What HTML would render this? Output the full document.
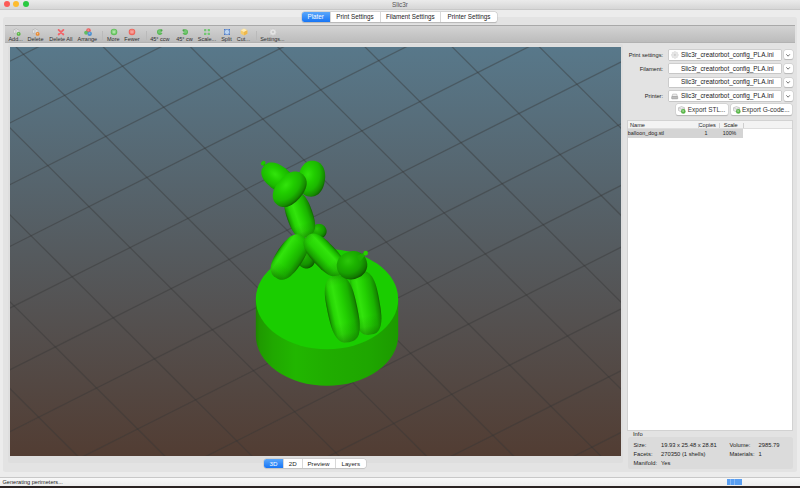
<!DOCTYPE html>
<html><head><meta charset="utf-8"><title>Slic3r</title>
<style>
*{box-sizing:border-box;margin:0;padding:0}
html,body{width:800px;height:488px;overflow:hidden}
body{background:#ececec;font-family:"Liberation Sans",sans-serif;font-size:6.3px;color:#222;position:relative}
.abs{position:absolute}
.t{position:absolute;white-space:nowrap;line-height:8px;height:8px}
#titlebar{left:0;top:0;width:800px;height:10px;background:linear-gradient(#ebebeb,#d6d6d6);border-bottom:1px solid #c8c8c8}
.tl{position:absolute;top:1.1px;width:6px;height:6px;border-radius:50%}
#outer{left:3.3px;top:17px;width:794.2px;height:455.2px;background:#e3e3e3;border-radius:2.5px}
#inner{left:7.8px;top:44px;width:615.5px;height:418.8px;background:#dedede;border-radius:2px}
#toolbar{left:5px;top:25px;width:790px;height:18px;background:linear-gradient(#d3d3d3,#bcbcbc);border-top:1px solid #a9a9a9;border-bottom:0.5px solid #b2b2b2}
.seg{position:absolute;display:flex;background:#fff;border-radius:2.5px;box-shadow:0 0 0 0.5px #c4c4c4,0 0.5px 1px rgba(0,0,0,.25);overflow:hidden}
.seg div{height:100%;text-align:center;border-right:0.5px solid #d8d8d8;white-space:nowrap}
.seg div:last-child{border-right:0}
.seg .on{background:linear-gradient(#5aa7fb,#1775f5);color:#fff}
.tbl{position:absolute;top:35px;font-size:5.5px;line-height:8px;white-space:nowrap;color:#303030;transform:translateX(-50%)}
.ico{position:absolute;top:27.8px;width:8px;height:8px;transform:translateX(-50%)}
.sep{position:absolute;top:30.5px;width:0.6px;height:9px;background:#bababa}
.combo{position:absolute;left:668.5px;width:112.8px;height:9.5px;background:#fff;border-radius:0.5px;box-shadow:0 0 0 0.6px #bcbcbc,0 0.4px 0.6px rgba(0,0,0,.15)}
.combo span{position:absolute;left:12.4px;top:0.8px;line-height:8px;font-size:6.4px;letter-spacing:-0.0px;white-space:nowrap;color:#1a1a1a}
.dd{position:absolute;left:783.7px;width:9.5px;height:9.3px;background:#fff;border-radius:2px;box-shadow:0 0 0 0.5px #c9c9c9,0 0.5px 0.8px rgba(0,0,0,.25)}
.dd svg{position:absolute;left:2.7px;top:3.6px}
.lab{position:absolute;right:136.9px;line-height:8px;white-space:nowrap;font-size:5.7px;color:#222}
.btn{position:absolute;top:104.3px;height:10.8px;background:#fff;border-radius:2px;box-shadow:0 0 0 0.5px #c9c9c9,0 0.5px 0.8px rgba(0,0,0,.28)}
.btn span{position:absolute;top:1.3px;line-height:8px;white-space:nowrap;font-size:6.45px;color:#333}
#list{left:627.2px;top:120.3px;width:166.3px;height:310.5px;background:#fff;border:0.5px solid #d2d2d2}
#lhead{left:0;top:0;width:100%;height:7.8px;background:#f3f3f3;border-bottom:0.5px solid #dedede}
#lrow{left:0;top:7.5px;width:115px;height:9.3px;background:#d4d4d4}
.lt{position:absolute;line-height:8px;font-size:5.3px;white-space:nowrap;color:#222}
.csep{position:absolute;top:1.5px;width:0.5px;height:5px;background:#cfcfcf}
#info{left:628.2px;top:437px;width:164.4px;height:32.2px;background:#dbdbdb;border-radius:2.5px}
.it{position:absolute;line-height:8px;font-size:5.8px;white-space:nowrap;color:#222}
#status{left:0;top:476.5px;width:800px;height:9px;background:linear-gradient(#f8f8f8,#ededed);border-top:0.5px solid #c8c8c8}
#dark{left:0;top:485.5px;width:800px;height:3px;background:#2a2322}
</style></head><body>
<div id="titlebar" class="abs">
 <div class="tl" style="left:3.5px;background:#fc5b57"></div>
 <div class="tl" style="left:13px;background:#fdbc2e"></div>
 <div class="tl" style="left:22.5px;background:#29c940"></div>
 <div class="t" style="left:0;width:800px;text-align:center;top:0.5px;font-size:6.4px;color:#555">Slic3r</div>
</div>
<div id="outer" class="abs"></div>
<div class="seg" style="left:302px;top:12px;width:195px;height:10px;font-size:6.3px;line-height:10px">
 <div class="on" style="width:28.5px">Plater</div><div style="width:50px">Print Settings</div><div style="width:60.5px">Filament Settings</div><div style="width:56px">Printer Settings</div>
</div>
<div id="toolbar" class="abs"></div>
<div id="tbitems">
<svg class="ico" style="left:17px" width="8" height="8" viewBox="0 0 16 16"><g fill="#ffffff" stroke="#9c9c9c" stroke-width="0.9"><rect x="1" y="3.5" width="3.2" height="7" rx="1.4"/><rect x="4.6" y="1.5" width="3.2" height="9" rx="1.4"/><rect x="8.2" y="3" width="3.2" height="7" rx="1.4"/></g><circle cx="11.3" cy="11.8" r="3.9" fill="#52b23e"/><circle cx="11" cy="11.3" r="1.6" fill="#a5dd96"/></svg><div class="tbl" style="left:15.6px">Add...</div><svg class="ico" style="left:36px" width="8" height="8" viewBox="0 0 16 16"><g fill="#ffffff" stroke="#9c9c9c" stroke-width="0.9"><rect x="1" y="3.5" width="3.2" height="7" rx="1.4"/><rect x="4.6" y="1.5" width="3.2" height="9" rx="1.4"/><rect x="8.2" y="3" width="3.2" height="7" rx="1.4"/></g><circle cx="11.3" cy="11.8" r="3.9" fill="#ea862c"/><circle cx="11" cy="11.3" r="1.6" fill="#f7c28d"/></svg><div class="tbl" style="left:35.5px">Delete</div><svg class="ico" style="left:61px" width="8" height="8" viewBox="0 0 16 16"><path d="M3.2 3.8L12.8 13M12.8 3.8L3.2 13" stroke="#f26468" stroke-width="3.6" stroke-linecap="round"/></svg><div class="tbl" style="left:60.8px">Delete All</div><svg class="ico" style="left:88px" width="8" height="8" viewBox="0 0 16 16"><circle cx="9" cy="5.2" r="4.6" fill="#e9605f"/><circle cx="4.3" cy="9.5" r="4" fill="#62bb62"/><circle cx="11.3" cy="11.3" r="4.5" fill="#4a8fd0"/><circle cx="8.6" cy="4.3" r="2" fill="#f4a3a0" opacity=".7"/><circle cx="11" cy="10.6" r="2" fill="#9cc6ea" opacity=".7"/></svg><div class="tbl" style="left:87.3px">Arrange</div><svg class="ico" style="left:113.5px" width="8" height="8" viewBox="0 0 16 16"><circle cx="8" cy="8" r="6.6" fill="#62c05c"/><circle cx="8" cy="7.4" r="4.6" fill="#93d98c" opacity=".75"/><path d="M8 5.4V10.6M5.4 8H10.6" stroke="#c4eebd" stroke-width="1.5"/></svg><div class="tbl" style="left:113.3px">More</div><svg class="ico" style="left:132px" width="8" height="8" viewBox="0 0 16 16"><circle cx="8" cy="8" r="6.6" fill="#ee655c"/><circle cx="8" cy="7.4" r="4.6" fill="#f59a92" opacity=".75"/><path d="M5.4 8H10.6" stroke="#fac6c0" stroke-width="1.5"/></svg><div class="tbl" style="left:132px">Fewer</div><svg class="ico" style="left:159.7px" width="8" height="8" viewBox="0 0 16 16"><circle cx="7.6" cy="8.2" r="5.6" fill="#5ab857"/><circle cx="7" cy="7.4" r="3.4" fill="#86d083" opacity=".6"/><path d="M9 8.4L15.5 4.6V11.5Z" fill="#c9c9c9"/><path d="M9.2 2.2L13.8 4.2L10 7Z" fill="#4aa548"/></svg><div class="tbl" style="left:159.9px">45° ccw</div><svg class="ico" style="left:184.6px" width="8" height="8" viewBox="0 0 16 16"><circle cx="8.4" cy="8.2" r="5.6" fill="#5ab857"/><circle cx="9" cy="7.4" r="3.4" fill="#86d083" opacity=".6"/><path d="M7 8.4L0.5 4.6V11.5Z" fill="#c9c9c9"/><path d="M6.8 2.2L2.2 4.2L6 7Z" fill="#4aa548"/></svg><div class="tbl" style="left:184.5px">45° cw</div><svg class="ico" style="left:207px" width="8" height="8" viewBox="0 0 16 16"><g fill="#72c772"><rect x="2" y="2" width="4.6" height="4.6" rx="1"/><rect x="9.4" y="2" width="4.6" height="4.6" rx="1"/><rect x="2" y="9.4" width="4.6" height="4.6" rx="1"/><rect x="9.4" y="9.4" width="4.6" height="4.6" rx="1"/></g></svg><div class="tbl" style="left:207px">Scale...</div><svg class="ico" style="left:226.6px" width="8" height="8" viewBox="0 0 16 16"><rect x="3.2" y="3.2" width="9.6" height="9.6" fill="#b9d3f2"/><g fill="#4878c8"><rect x="2" y="2" width="3.2" height="3.2"/><rect x="10.8" y="2" width="3.2" height="3.2"/><rect x="2" y="10.8" width="3.2" height="3.2"/><rect x="10.8" y="10.8" width="3.2" height="3.2"/><rect x="6.6" y="2.2" width="2.6" height="1.8"/><rect x="6.6" y="12" width="2.6" height="1.8"/><rect x="2.2" y="6.6" width="1.8" height="2.6"/><rect x="12" y="6.6" width="1.8" height="2.6"/></g></svg><div class="tbl" style="left:226.5px">Split</div><svg class="ico" style="left:243.7px" width="8" height="8" viewBox="0 0 16 16"><path d="M8 1.2L14.6 4.4V11.4L8 14.8L1.4 11.4V4.4Z" fill="#f5cb6c"/><path d="M8 1.2L14.6 4.4L8 7.8L1.4 4.4Z" fill="#fdecb8"/><path d="M8 7.8V14.8L14.6 11.4V4.4Z" fill="#eeb84c"/></svg><div class="tbl" style="left:243.4px">Cut...</div><svg class="ico" style="left:272.75px" width="8" height="8" viewBox="0 0 16 16"><g fill="#e4e4e4" stroke="#bcbcbc" stroke-width="0.5"><rect x="6.4" y="0.8" width="3.2" height="14.4" rx="0.8" transform="rotate(0 8 8)"/><rect x="6.4" y="0.8" width="3.2" height="14.4" rx="0.8" transform="rotate(45 8 8)"/><rect x="6.4" y="0.8" width="3.2" height="14.4" rx="0.8" transform="rotate(90 8 8)"/><rect x="6.4" y="0.8" width="3.2" height="14.4" rx="0.8" transform="rotate(135 8 8)"/></g><circle cx="8" cy="8" r="5.2" fill="#e4e4e4"/><circle cx="8" cy="8" r="2.2" fill="#c6c6c6"/></svg><div class="tbl" style="left:272.4px">Settings...</div><div class="sep" style="left:102px"></div><div class="sep" style="left:145.5px"></div><div class="sep" style="left:255.6px"></div>
</div>
<div id="inner" class="abs"></div>
<div class="abs" style="left:9.6px;top:47px;width:611.4px;height:409.1px;overflow:hidden"><svg id="cv" width="611.4" height="409.1" viewBox="0 0 611.4 409.1">
<defs>
<linearGradient id="bg" x1="0" y1="0" x2="0" y2="1"><stop offset="0" stop-color="#58788a"/><stop offset="1" stop-color="#523d33"/></linearGradient>
<linearGradient id="side" x1="0" y1="0" x2="1" y2="0"><stop offset="0" stop-color="#1e8600"/><stop offset="0.03" stop-color="#1f9a00"/><stop offset="0.12" stop-color="#20a800"/><stop offset="0.28" stop-color="#21b600"/><stop offset="0.5" stop-color="#20ad00"/><stop offset="0.8" stop-color="#1ea600"/><stop offset="1" stop-color="#1c9a00"/></linearGradient>
<radialGradient id="g0" cx="0.364" cy="0.340" r="0.72" fx="0.364" fy="0.340"><stop offset="0" stop-color="#2ac10a"/><stop offset="0.32" stop-color="#1caf00"/><stop offset="0.62" stop-color="#169c00"/><stop offset="0.86" stop-color="#117500"/><stop offset="1" stop-color="#0c4a00"/></radialGradient><radialGradient id="g1" cx="0.360" cy="0.348" r="0.72" fx="0.360" fy="0.348"><stop offset="0" stop-color="#28b609"/><stop offset="0.32" stop-color="#1aa400"/><stop offset="0.62" stop-color="#159300"/><stop offset="0.86" stop-color="#106e00"/><stop offset="1" stop-color="#0c4600"/></radialGradient><radialGradient id="g2" cx="0.339" cy="0.397" r="0.72" fx="0.339" fy="0.397"><stop offset="0" stop-color="#32e40c"/><stop offset="0.32" stop-color="#21ce00"/><stop offset="0.62" stop-color="#1bb800"/><stop offset="0.86" stop-color="#158a00"/><stop offset="1" stop-color="#0f5800"/></radialGradient><radialGradient id="g3" cx="0.368" cy="0.460" r="0.72" fx="0.368" fy="0.460"><stop offset="0" stop-color="#32e40c"/><stop offset="0.32" stop-color="#21ce00"/><stop offset="0.62" stop-color="#1bb800"/><stop offset="0.86" stop-color="#158a00"/><stop offset="1" stop-color="#0f5800"/></radialGradient><linearGradient id="g4" x1="0" y1="0" x2="1" y2="0"><stop offset="0.000" stop-color="#126400"/><stop offset="0.059" stop-color="#18a000"/><stop offset="0.201" stop-color="#26d404"/><stop offset="0.366" stop-color="#32e40c"/><stop offset="0.588" stop-color="#23d002"/><stop offset="0.810" stop-color="#1ab200"/><stop offset="0.949" stop-color="#158700"/><stop offset="1.000" stop-color="#115f00"/></linearGradient><linearGradient id="g4e" x1="0" y1="0" x2="0" y2="1"><stop offset="0" stop-color="#0c4000" stop-opacity="0.22"/><stop offset="0.063" stop-color="#0c4000" stop-opacity="0.07"/><stop offset="0.14" stop-color="#0c4000" stop-opacity="0"/><stop offset="0.7" stop-color="#0c4000" stop-opacity="0"/><stop offset="0.865" stop-color="#0c4000" stop-opacity="0.13"/><stop offset="1" stop-color="#0c4000" stop-opacity="0.42"/></linearGradient><radialGradient id="g6" cx="0.519" cy="0.289" r="0.72" fx="0.519" fy="0.289"><stop offset="0" stop-color="#32e40c"/><stop offset="0.32" stop-color="#21ce00"/><stop offset="0.62" stop-color="#1bb800"/><stop offset="0.86" stop-color="#158a00"/><stop offset="1" stop-color="#0f5800"/></radialGradient><linearGradient id="g7" x1="0" y1="0" x2="1" y2="0"><stop offset="0.000" stop-color="#126400"/><stop offset="0.032" stop-color="#18a000"/><stop offset="0.110" stop-color="#26d404"/><stop offset="0.200" stop-color="#32e40c"/><stop offset="0.480" stop-color="#23d002"/><stop offset="0.760" stop-color="#1ab200"/><stop offset="0.936" stop-color="#158700"/><stop offset="1.000" stop-color="#115f00"/></linearGradient><linearGradient id="g7e" x1="0" y1="0" x2="0" y2="1"><stop offset="0" stop-color="#0c4000" stop-opacity="0.22"/><stop offset="0.063" stop-color="#0c4000" stop-opacity="0.07"/><stop offset="0.14" stop-color="#0c4000" stop-opacity="0"/><stop offset="0.7" stop-color="#0c4000" stop-opacity="0"/><stop offset="0.865" stop-color="#0c4000" stop-opacity="0.13"/><stop offset="1" stop-color="#0c4000" stop-opacity="0.42"/></linearGradient><linearGradient id="g9" x1="0" y1="0" x2="1" y2="0"><stop offset="0.000" stop-color="#126400"/><stop offset="0.112" stop-color="#18a000"/><stop offset="0.385" stop-color="#26d404"/><stop offset="0.700" stop-color="#32e40c"/><stop offset="0.805" stop-color="#23d002"/><stop offset="0.910" stop-color="#1ab200"/><stop offset="0.976" stop-color="#158700"/><stop offset="1.000" stop-color="#115f00"/></linearGradient><linearGradient id="g9e" x1="0" y1="0" x2="0" y2="1"><stop offset="0" stop-color="#0c4000" stop-opacity="0.22"/><stop offset="0.063" stop-color="#0c4000" stop-opacity="0.07"/><stop offset="0.14" stop-color="#0c4000" stop-opacity="0"/><stop offset="0.7" stop-color="#0c4000" stop-opacity="0"/><stop offset="0.865" stop-color="#0c4000" stop-opacity="0.13"/><stop offset="1" stop-color="#0c4000" stop-opacity="0.42"/></linearGradient><linearGradient id="g11" x1="0" y1="0" x2="1" y2="0"><stop offset="0.000" stop-color="#126400"/><stop offset="0.051" stop-color="#18a000"/><stop offset="0.175" stop-color="#26d404"/><stop offset="0.318" stop-color="#32e40c"/><stop offset="0.557" stop-color="#23d002"/><stop offset="0.795" stop-color="#1ab200"/><stop offset="0.945" stop-color="#158700"/><stop offset="1.000" stop-color="#115f00"/></linearGradient><linearGradient id="g11e" x1="0" y1="0" x2="0" y2="1"><stop offset="0" stop-color="#0c4000" stop-opacity="0.22"/><stop offset="0.063" stop-color="#0c4000" stop-opacity="0.07"/><stop offset="0.14" stop-color="#0c4000" stop-opacity="0"/><stop offset="0.7" stop-color="#0c4000" stop-opacity="0"/><stop offset="0.865" stop-color="#0c4000" stop-opacity="0.13"/><stop offset="1" stop-color="#0c4000" stop-opacity="0.42"/></linearGradient><linearGradient id="g13" x1="0" y1="0" x2="1" y2="0"><stop offset="0.000" stop-color="#126400"/><stop offset="0.053" stop-color="#18a000"/><stop offset="0.181" stop-color="#26d404"/><stop offset="0.328" stop-color="#32e40c"/><stop offset="0.563" stop-color="#23d002"/><stop offset="0.798" stop-color="#1ab200"/><stop offset="0.946" stop-color="#158700"/><stop offset="1.000" stop-color="#115f00"/></linearGradient><linearGradient id="g13e" x1="0" y1="0" x2="0" y2="1"><stop offset="0" stop-color="#0c4000" stop-opacity="0.22"/><stop offset="0.063" stop-color="#0c4000" stop-opacity="0.07"/><stop offset="0.14" stop-color="#0c4000" stop-opacity="0"/><stop offset="0.7" stop-color="#0c4000" stop-opacity="0"/><stop offset="0.865" stop-color="#0c4000" stop-opacity="0.13"/><stop offset="1" stop-color="#0c4000" stop-opacity="0.42"/></linearGradient><radialGradient id="g15" cx="0.430" cy="0.302" r="0.72" fx="0.430" fy="0.302"><stop offset="0" stop-color="#2cc80a"/><stop offset="0.32" stop-color="#1db500"/><stop offset="0.62" stop-color="#17a100"/><stop offset="0.86" stop-color="#127900"/><stop offset="1" stop-color="#0d4d00"/></radialGradient><radialGradient id="bal" cx="0.42" cy="0.4" r="0.62"><stop offset="0" stop-color="#22d400"/><stop offset="0.55" stop-color="#1cc000"/><stop offset="0.85" stop-color="#189800"/><stop offset="1" stop-color="#157000"/></radialGradient>
</defs>
<rect width="611.4" height="409.1" fill="url(#bg)"/>
<g stroke="#383838" stroke-opacity="0.42" stroke-width="1.25"><line x1="-1364.5" y1="-409.9" x2="281.1" y2="1230.9"/><line x1="-1306.5" y1="-439.1" x2="339.1" y2="1201.7"/><line x1="-1248.6" y1="-468.3" x2="397.0" y2="1172.5"/><line x1="-1190.6" y1="-497.5" x2="455.0" y2="1143.3"/><line x1="-1132.7" y1="-526.7" x2="512.9" y2="1114.1"/><line x1="-1074.7" y1="-555.9" x2="570.9" y2="1084.9"/><line x1="-1016.8" y1="-585.1" x2="628.8" y2="1055.7"/><line x1="-958.8" y1="-614.3" x2="686.8" y2="1026.5"/><line x1="-900.9" y1="-643.5" x2="744.7" y2="997.3"/><line x1="-842.9" y1="-672.7" x2="802.7" y2="968.2"/><line x1="-785.0" y1="-701.8" x2="860.6" y2="939.0"/><line x1="-727.0" y1="-731.0" x2="918.6" y2="909.8"/><line x1="-669.1" y1="-760.2" x2="976.5" y2="880.6"/><line x1="-611.1" y1="-789.4" x2="1034.5" y2="851.4"/><line x1="-553.2" y1="-818.6" x2="1092.4" y2="822.2"/><line x1="-495.2" y1="-847.8" x2="1150.4" y2="793.0"/><line x1="-437.3" y1="-877.0" x2="1208.3" y2="763.8"/><line x1="-379.3" y1="-906.2" x2="1266.3" y2="734.6"/><line x1="-321.4" y1="-935.4" x2="1324.2" y2="705.4"/><line x1="-263.4" y1="-964.6" x2="1382.2" y2="676.3"/><line x1="-205.5" y1="-993.7" x2="1440.1" y2="647.1"/><line x1="-147.5" y1="-1022.9" x2="1498.1" y2="617.9"/><line x1="-89.6" y1="-1052.1" x2="1556.0" y2="588.7"/><line x1="-31.6" y1="-1081.3" x2="1614.0" y2="559.5"/><line x1="26.3" y1="-1110.5" x2="1671.9" y2="530.3"/><line x1="84.3" y1="-1139.7" x2="1729.9" y2="501.1"/><line x1="-1498.9" y1="151.7" x2="819.1" y2="-1015.9"/><line x1="-1457.8" y1="192.8" x2="860.2" y2="-974.8"/><line x1="-1416.7" y1="233.8" x2="901.3" y2="-933.8"/><line x1="-1375.5" y1="274.8" x2="942.5" y2="-892.8"/><line x1="-1334.4" y1="315.8" x2="983.6" y2="-851.8"/><line x1="-1293.2" y1="356.8" x2="1024.8" y2="-810.8"/><line x1="-1252.1" y1="397.9" x2="1065.9" y2="-769.7"/><line x1="-1211.0" y1="438.9" x2="1107.0" y2="-728.7"/><line x1="-1169.8" y1="479.9" x2="1148.2" y2="-687.7"/><line x1="-1128.7" y1="520.9" x2="1189.3" y2="-646.7"/><line x1="-1087.5" y1="561.9" x2="1230.5" y2="-605.7"/><line x1="-1046.4" y1="603.0" x2="1271.6" y2="-564.6"/><line x1="-1005.3" y1="644.0" x2="1312.7" y2="-523.6"/><line x1="-964.1" y1="685.0" x2="1353.9" y2="-482.6"/><line x1="-923.0" y1="726.0" x2="1395.0" y2="-441.6"/><line x1="-881.8" y1="767.0" x2="1436.2" y2="-400.6"/><line x1="-840.7" y1="808.1" x2="1477.3" y2="-359.5"/><line x1="-799.6" y1="849.1" x2="1518.4" y2="-318.5"/><line x1="-758.4" y1="890.1" x2="1559.6" y2="-277.5"/><line x1="-717.3" y1="931.1" x2="1600.7" y2="-236.5"/><line x1="-676.1" y1="972.1" x2="1641.9" y2="-195.5"/><line x1="-635.0" y1="1013.2" x2="1683.0" y2="-154.4"/><line x1="-593.9" y1="1054.2" x2="1724.1" y2="-113.4"/><line x1="-552.7" y1="1095.2" x2="1765.3" y2="-72.4"/><line x1="-511.6" y1="1136.2" x2="1806.4" y2="-31.4"/><line x1="-470.4" y1="1177.2" x2="1847.6" y2="9.6"/></g>
<path d="M245.8 252.2 L245.8 288.6 A71.2 50.1 0 0 0 388.2 288.6 L388.2 252.2 Z" fill="url(#side)"/><ellipse cx="317.0" cy="252.2" rx="71.2" ry="50.1" fill="#1acd00"/><ellipse cx="253.2" cy="116.2" rx="2.6" ry="2.0" transform="rotate(-40 253.2 116.2)" fill="#1fc400" /><path d="M253.9 117.5 L256.9 120.5" stroke="#1cb000" stroke-width="2.2"/><path d="M7.6 0.0 L7.6 0.8 L7.4 1.6 L7.2 2.4 L6.8 3.2 L6.4 3.9 L5.9 4.6 L5.4 5.2 L4.7 5.8 L4.0 6.3 L3.3 6.7 L2.5 7.0 L1.7 7.2 L0.9 7.4 L0.0 7.4 L-0.9 7.4 L-1.7 7.2 L-2.5 7.0 L-3.3 6.7 L-4.0 6.3 L-4.7 5.8 L-5.4 5.2 L-5.9 4.6 L-6.4 3.9 L-6.8 3.2 L-7.2 2.4 L-7.4 1.6 L-7.6 0.8 L-7.6 0.0 L-7.6 -0.8 L-7.4 -1.6 L-7.2 -2.4 L-6.8 -3.2 L-6.4 -3.9 L-5.9 -4.6 L-5.4 -5.2 L-4.7 -5.8 L-4.0 -6.3 L-3.3 -6.7 L-2.5 -7.0 L-1.7 -7.2 L-0.9 -7.4 L-0.0 -7.4 L0.9 -7.4 L1.7 -7.2 L2.5 -7.0 L3.3 -6.7 L4.0 -6.3 L4.7 -5.8 L5.4 -5.2 L5.9 -4.6 L6.4 -3.9 L6.8 -3.2 L7.2 -2.4 L7.4 -1.6 L7.6 -0.8Z" transform="translate(309.0 184.3) rotate(0)" fill="url(#g0)"/><path d="M9.0 0.0 L8.9 1.1 L8.8 2.1 L8.5 3.1 L8.1 4.1 L7.6 5.1 L7.0 5.9 L6.4 6.7 L5.6 7.4 L4.8 8.0 L3.9 8.6 L3.0 9.0 L2.0 9.3 L1.0 9.4 L0.0 9.5 L-1.0 9.4 L-2.0 9.3 L-3.0 9.0 L-3.9 8.6 L-4.8 8.0 L-5.6 7.4 L-6.4 6.7 L-7.0 5.9 L-7.6 5.1 L-8.1 4.1 L-8.5 3.1 L-8.8 2.1 L-8.9 1.1 L-9.0 0.0 L-8.9 -1.1 L-8.8 -2.1 L-8.5 -3.1 L-8.1 -4.1 L-7.6 -5.1 L-7.0 -5.9 L-6.4 -6.7 L-5.6 -7.4 L-4.8 -8.0 L-3.9 -8.6 L-3.0 -9.0 L-2.0 -9.3 L-1.0 -9.4 L-0.0 -9.5 L1.0 -9.4 L2.0 -9.3 L3.0 -9.0 L3.9 -8.6 L4.8 -8.0 L5.6 -7.4 L6.4 -6.7 L7.0 -5.9 L7.6 -5.1 L8.1 -4.1 L8.5 -3.1 L8.8 -2.1 L8.9 -1.1Z" transform="translate(296.4 212.0) rotate(0)" fill="url(#g1)"/><path d="M13.3 0.0 L13.2 2.5 L13.0 4.6 L12.6 6.6 L12.1 8.4 L11.4 10.1 L10.6 11.7 L9.7 13.1 L8.7 14.4 L7.5 15.5 L6.2 16.4 L4.9 17.1 L3.4 17.6 L1.8 17.9 L0.0 18.0 L-1.8 17.9 L-3.4 17.6 L-4.9 17.1 L-6.2 16.4 L-7.5 15.5 L-8.7 14.4 L-9.7 13.1 L-10.6 11.7 L-11.4 10.1 L-12.1 8.4 L-12.6 6.6 L-13.0 4.6 L-13.2 2.5 L-13.3 0.0 L-13.2 -2.5 L-13.0 -4.6 L-12.6 -6.6 L-12.1 -8.4 L-11.4 -10.1 L-10.6 -11.7 L-9.7 -13.1 L-8.7 -14.4 L-7.5 -15.5 L-6.2 -16.4 L-4.9 -17.1 L-3.4 -17.6 L-1.8 -17.9 L-0.0 -18.0 L1.8 -17.9 L3.4 -17.6 L4.9 -17.1 L6.2 -16.4 L7.5 -15.5 L8.7 -14.4 L9.7 -13.1 L10.6 -11.7 L11.4 -10.1 L12.1 -8.4 L12.6 -6.6 L13.0 -4.6 L13.2 -2.5Z" transform="translate(301.7 131.7) rotate(8)" fill="url(#g2)"/><path d="M18.8 0.0 L18.7 1.8 L18.4 3.2 L17.9 4.5 L17.2 5.8 L16.3 6.9 L15.2 7.9 L13.9 8.8 L12.5 9.6 L10.9 10.3 L9.1 10.9 L7.2 11.3 L5.1 11.6 L2.8 11.8 L0.0 11.9 L-2.8 11.8 L-5.1 11.6 L-7.2 11.3 L-9.1 10.9 L-10.9 10.3 L-12.5 9.6 L-13.9 8.8 L-15.2 7.9 L-16.3 6.9 L-17.2 5.8 L-17.9 4.5 L-18.4 3.2 L-18.7 1.8 L-18.8 0.0 L-18.7 -1.8 L-18.4 -3.2 L-17.9 -4.5 L-17.2 -5.8 L-16.3 -6.9 L-15.2 -7.9 L-13.9 -8.8 L-12.5 -9.6 L-10.9 -10.3 L-9.1 -10.9 L-7.2 -11.3 L-5.1 -11.6 L-2.8 -11.8 L-0.0 -11.9 L2.8 -11.8 L5.1 -11.6 L7.2 -11.3 L9.1 -10.9 L10.9 -10.3 L12.5 -9.6 L13.9 -8.8 L15.2 -7.9 L16.3 -6.9 L17.2 -5.8 L17.9 -4.5 L18.4 -3.2 L18.7 -1.8Z" transform="translate(268.4 131.0) rotate(38)" fill="url(#g3)"/><path d="M13.0 0.0 L12.9 4.3 L12.7 7.2 L12.4 9.8 L12.0 12.1 L11.4 14.2 L10.8 16.0 L10.0 17.6 L9.0 19.0 L8.0 20.2 L6.8 21.2 L5.5 22.0 L4.1 22.6 L2.4 22.9 L0.0 23.0 L-2.4 22.9 L-4.1 22.6 L-5.5 22.0 L-6.8 21.2 L-8.0 20.2 L-9.0 19.0 L-10.0 17.6 L-10.8 16.0 L-11.4 14.2 L-12.0 12.1 L-12.4 9.8 L-12.7 7.2 L-12.9 4.3 L-13.0 0.0 L-12.9 -4.3 L-12.7 -7.2 L-12.4 -9.8 L-12.0 -12.1 L-11.4 -14.2 L-10.8 -16.0 L-10.0 -17.6 L-9.0 -19.0 L-8.0 -20.2 L-6.8 -21.2 L-5.5 -22.0 L-4.1 -22.6 L-2.4 -22.9 L-0.0 -23.0 L2.4 -22.9 L4.1 -22.6 L5.5 -22.0 L6.8 -21.2 L8.0 -20.2 L9.0 -19.0 L10.0 -17.6 L10.8 -16.0 L11.4 -14.2 L12.0 -12.1 L12.4 -9.8 L12.7 -7.2 L12.9 -4.3Z" transform="translate(289.7 168.0) rotate(-19)" fill="url(#g4)"/><path d="M13.0 0.0 L12.9 4.3 L12.7 7.2 L12.4 9.8 L12.0 12.1 L11.4 14.2 L10.8 16.0 L10.0 17.6 L9.0 19.0 L8.0 20.2 L6.8 21.2 L5.5 22.0 L4.1 22.6 L2.4 22.9 L0.0 23.0 L-2.4 22.9 L-4.1 22.6 L-5.5 22.0 L-6.8 21.2 L-8.0 20.2 L-9.0 19.0 L-10.0 17.6 L-10.8 16.0 L-11.4 14.2 L-12.0 12.1 L-12.4 9.8 L-12.7 7.2 L-12.9 4.3 L-13.0 0.0 L-12.9 -4.3 L-12.7 -7.2 L-12.4 -9.8 L-12.0 -12.1 L-11.4 -14.2 L-10.8 -16.0 L-10.0 -17.6 L-9.0 -19.0 L-8.0 -20.2 L-6.8 -21.2 L-5.5 -22.0 L-4.1 -22.6 L-2.4 -22.9 L-0.0 -23.0 L2.4 -22.9 L4.1 -22.6 L5.5 -22.0 L6.8 -21.2 L8.0 -20.2 L9.0 -19.0 L10.0 -17.6 L10.8 -16.0 L11.4 -14.2 L12.0 -12.1 L12.4 -9.8 L12.7 -7.2 L12.9 -4.3Z" transform="translate(289.7 168.0) rotate(-19)" fill="url(#g4e)"/><path d="M19.8 0.0 L19.7 1.9 L19.4 3.5 L18.8 4.9 L18.0 6.3 L17.1 7.5 L15.9 8.7 L14.6 9.7 L13.0 10.6 L11.3 11.4 L9.4 12.0 L7.4 12.5 L5.2 12.9 L2.8 13.1 L0.0 13.2 L-2.8 13.1 L-5.2 12.9 L-7.4 12.5 L-9.4 12.0 L-11.3 11.4 L-13.0 10.6 L-14.6 9.7 L-15.9 8.7 L-17.1 7.5 L-18.0 6.3 L-18.8 4.9 L-19.4 3.5 L-19.7 1.9 L-19.8 0.0 L-19.7 -1.9 L-19.4 -3.5 L-18.8 -4.9 L-18.0 -6.3 L-17.1 -7.5 L-15.9 -8.7 L-14.6 -9.7 L-13.0 -10.6 L-11.3 -11.4 L-9.4 -12.0 L-7.4 -12.5 L-5.2 -12.9 L-2.8 -13.1 L-0.0 -13.2 L2.8 -13.1 L5.2 -12.9 L7.4 -12.5 L9.4 -12.0 L11.3 -11.4 L13.0 -10.6 L14.6 -9.7 L15.9 -8.7 L17.1 -7.5 L18.0 -6.3 L18.8 -4.9 L19.4 -3.5 L19.7 -1.9Z" transform="translate(279.7 142.3) rotate(-49)" fill="url(#g6)"/><path d="M13.2 0.0 L13.1 4.3 L12.9 7.5 L12.6 10.2 L12.1 12.7 L11.6 15.0 L10.8 17.0 L10.0 18.8 L9.0 20.4 L8.0 21.7 L6.8 22.8 L5.4 23.7 L4.0 24.3 L2.3 24.7 L0.0 24.8 L-2.3 24.7 L-4.0 24.3 L-5.4 23.7 L-6.8 22.8 L-8.0 21.7 L-9.0 20.4 L-10.0 18.8 L-10.8 17.0 L-11.6 15.0 L-12.1 12.7 L-12.6 10.2 L-12.9 7.5 L-13.1 4.3 L-13.2 0.0 L-13.1 -4.3 L-12.9 -7.5 L-12.6 -10.2 L-12.1 -12.7 L-11.6 -15.0 L-10.8 -17.0 L-10.0 -18.8 L-9.0 -20.4 L-8.0 -21.7 L-6.8 -22.8 L-5.4 -23.7 L-4.0 -24.3 L-2.3 -24.7 L-0.0 -24.8 L2.3 -24.7 L4.0 -24.3 L5.4 -23.7 L6.8 -22.8 L8.0 -21.7 L9.0 -20.4 L10.0 -18.8 L10.8 -17.0 L11.6 -15.0 L12.1 -12.7 L12.6 -10.2 L12.9 -7.5 L13.1 -4.3Z" transform="translate(279.5 210.0) rotate(34)" fill="url(#g7)"/><path d="M13.2 0.0 L13.1 4.3 L12.9 7.5 L12.6 10.2 L12.1 12.7 L11.6 15.0 L10.8 17.0 L10.0 18.8 L9.0 20.4 L8.0 21.7 L6.8 22.8 L5.4 23.7 L4.0 24.3 L2.3 24.7 L0.0 24.8 L-2.3 24.7 L-4.0 24.3 L-5.4 23.7 L-6.8 22.8 L-8.0 21.7 L-9.0 20.4 L-10.0 18.8 L-10.8 17.0 L-11.6 15.0 L-12.1 12.7 L-12.6 10.2 L-12.9 7.5 L-13.1 4.3 L-13.2 0.0 L-13.1 -4.3 L-12.9 -7.5 L-12.6 -10.2 L-12.1 -12.7 L-11.6 -15.0 L-10.8 -17.0 L-10.0 -18.8 L-9.0 -20.4 L-8.0 -21.7 L-6.8 -22.8 L-5.4 -23.7 L-4.0 -24.3 L-2.3 -24.7 L-0.0 -24.8 L2.3 -24.7 L4.0 -24.3 L5.4 -23.7 L6.8 -22.8 L8.0 -21.7 L9.0 -20.4 L10.0 -18.8 L10.8 -17.0 L11.6 -15.0 L12.1 -12.7 L12.6 -10.2 L12.9 -7.5 L13.1 -4.3Z" transform="translate(279.5 210.0) rotate(34)" fill="url(#g7e)"/><path d="M12.2 0.0 L12.1 4.7 L12.0 8.0 L11.7 10.9 L11.3 13.4 L10.7 15.7 L10.1 17.7 L9.3 19.5 L8.5 21.1 L7.5 22.4 L6.4 23.5 L5.2 24.4 L3.8 25.0 L2.3 25.4 L0.0 25.5 L-2.3 25.4 L-3.8 25.0 L-5.2 24.4 L-6.4 23.5 L-7.5 22.4 L-8.5 21.1 L-9.3 19.5 L-10.1 17.7 L-10.7 15.7 L-11.3 13.4 L-11.7 10.9 L-12.0 8.0 L-12.1 4.7 L-12.2 0.0 L-12.1 -4.7 L-12.0 -8.0 L-11.7 -10.9 L-11.3 -13.4 L-10.7 -15.7 L-10.1 -17.7 L-9.3 -19.5 L-8.5 -21.1 L-7.5 -22.4 L-6.4 -23.5 L-5.2 -24.4 L-3.8 -25.0 L-2.3 -25.4 L-0.0 -25.5 L2.3 -25.4 L3.8 -25.0 L5.2 -24.4 L6.4 -23.5 L7.5 -22.4 L8.5 -21.1 L9.3 -19.5 L10.1 -17.7 L10.7 -15.7 L11.3 -13.4 L11.7 -10.9 L12.0 -8.0 L12.1 -4.7Z" transform="translate(314.3 208.1) rotate(-43)" fill="url(#g9)"/><path d="M12.2 0.0 L12.1 4.7 L12.0 8.0 L11.7 10.9 L11.3 13.4 L10.7 15.7 L10.1 17.7 L9.3 19.5 L8.5 21.1 L7.5 22.4 L6.4 23.5 L5.2 24.4 L3.8 25.0 L2.3 25.4 L0.0 25.5 L-2.3 25.4 L-3.8 25.0 L-5.2 24.4 L-6.4 23.5 L-7.5 22.4 L-8.5 21.1 L-9.3 19.5 L-10.1 17.7 L-10.7 15.7 L-11.3 13.4 L-11.7 10.9 L-12.0 8.0 L-12.1 4.7 L-12.2 0.0 L-12.1 -4.7 L-12.0 -8.0 L-11.7 -10.9 L-11.3 -13.4 L-10.7 -15.7 L-10.1 -17.7 L-9.3 -19.5 L-8.5 -21.1 L-7.5 -22.4 L-6.4 -23.5 L-5.2 -24.4 L-3.8 -25.0 L-2.3 -25.4 L-0.0 -25.5 L2.3 -25.4 L3.8 -25.0 L5.2 -24.4 L6.4 -23.5 L7.5 -22.4 L8.5 -21.1 L9.3 -19.5 L10.1 -17.7 L10.7 -15.7 L11.3 -13.4 L11.7 -10.9 L12.0 -8.0 L12.1 -4.7Z" transform="translate(314.3 208.1) rotate(-43)" fill="url(#g9e)"/><path d="M14.2 0.0 L14.1 6.7 L13.9 10.9 L13.6 14.5 L13.2 17.6 L12.6 20.4 L11.9 22.8 L11.1 25.0 L10.1 26.8 L9.0 28.4 L7.8 29.7 L6.4 30.7 L4.9 31.4 L3.0 31.9 L0.0 32.0 L-3.0 31.9 L-4.9 31.4 L-6.4 30.7 L-7.8 29.7 L-9.0 28.4 L-10.1 26.8 L-11.1 25.0 L-11.9 22.8 L-12.6 20.4 L-13.2 17.6 L-13.6 14.5 L-13.9 10.9 L-14.1 6.7 L-14.2 0.0 L-14.1 -6.7 L-13.9 -10.9 L-13.6 -14.5 L-13.2 -17.6 L-12.6 -20.4 L-11.9 -22.8 L-11.1 -25.0 L-10.1 -26.8 L-9.0 -28.4 L-7.8 -29.7 L-6.4 -30.7 L-4.9 -31.4 L-3.0 -31.9 L-0.0 -32.0 L3.0 -31.9 L4.9 -31.4 L6.4 -30.7 L7.8 -29.7 L9.0 -28.4 L10.1 -26.8 L11.1 -25.0 L11.9 -22.8 L12.6 -20.4 L13.2 -17.6 L13.6 -14.5 L13.9 -10.9 L14.1 -6.7Z" transform="translate(355.4 256.1) rotate(-10)" fill="url(#g11)"/><path d="M14.2 0.0 L14.1 6.7 L13.9 10.9 L13.6 14.5 L13.2 17.6 L12.6 20.4 L11.9 22.8 L11.1 25.0 L10.1 26.8 L9.0 28.4 L7.8 29.7 L6.4 30.7 L4.9 31.4 L3.0 31.9 L0.0 32.0 L-3.0 31.9 L-4.9 31.4 L-6.4 30.7 L-7.8 29.7 L-9.0 28.4 L-10.1 26.8 L-11.1 25.0 L-11.9 22.8 L-12.6 20.4 L-13.2 17.6 L-13.6 14.5 L-13.9 10.9 L-14.1 6.7 L-14.2 0.0 L-14.1 -6.7 L-13.9 -10.9 L-13.6 -14.5 L-13.2 -17.6 L-12.6 -20.4 L-11.9 -22.8 L-11.1 -25.0 L-10.1 -26.8 L-9.0 -28.4 L-7.8 -29.7 L-6.4 -30.7 L-4.9 -31.4 L-3.0 -31.9 L-0.0 -32.0 L3.0 -31.9 L4.9 -31.4 L6.4 -30.7 L7.8 -29.7 L9.0 -28.4 L10.1 -26.8 L11.1 -25.0 L11.9 -22.8 L12.6 -20.4 L13.2 -17.6 L13.6 -14.5 L13.9 -10.9 L14.1 -6.7Z" transform="translate(355.4 256.1) rotate(-10)" fill="url(#g11e)"/><path d="M15.0 0.0 L14.9 7.1 L14.7 11.6 L14.4 15.3 L13.9 18.6 L13.3 21.5 L12.6 24.1 L11.7 26.4 L10.7 28.4 L9.6 30.0 L8.3 31.4 L6.8 32.4 L5.1 33.2 L3.1 33.6 L0.0 33.8 L-3.1 33.6 L-5.1 33.2 L-6.8 32.4 L-8.3 31.4 L-9.6 30.0 L-10.7 28.4 L-11.7 26.4 L-12.6 24.1 L-13.3 21.5 L-13.9 18.6 L-14.4 15.3 L-14.7 11.6 L-14.9 7.1 L-15.0 0.0 L-14.9 -7.1 L-14.7 -11.6 L-14.4 -15.3 L-13.9 -18.6 L-13.3 -21.5 L-12.6 -24.1 L-11.7 -26.4 L-10.7 -28.4 L-9.6 -30.0 L-8.3 -31.4 L-6.8 -32.4 L-5.1 -33.2 L-3.1 -33.6 L-0.0 -33.8 L3.1 -33.6 L5.1 -33.2 L6.8 -32.4 L8.3 -31.4 L9.6 -30.0 L10.7 -28.4 L11.7 -26.4 L12.6 -24.1 L13.3 -21.5 L13.9 -18.6 L14.4 -15.3 L14.7 -11.6 L14.9 -7.1Z" transform="translate(332.3 262.1) rotate(-12)" fill="url(#g13)"/><path d="M15.0 0.0 L14.9 7.1 L14.7 11.6 L14.4 15.3 L13.9 18.6 L13.3 21.5 L12.6 24.1 L11.7 26.4 L10.7 28.4 L9.6 30.0 L8.3 31.4 L6.8 32.4 L5.1 33.2 L3.1 33.6 L0.0 33.8 L-3.1 33.6 L-5.1 33.2 L-6.8 32.4 L-8.3 31.4 L-9.6 30.0 L-10.7 28.4 L-11.7 26.4 L-12.6 24.1 L-13.3 21.5 L-13.9 18.6 L-14.4 15.3 L-14.7 11.6 L-14.9 7.1 L-15.0 0.0 L-14.9 -7.1 L-14.7 -11.6 L-14.4 -15.3 L-13.9 -18.6 L-13.3 -21.5 L-12.6 -24.1 L-11.7 -26.4 L-10.7 -28.4 L-9.6 -30.0 L-8.3 -31.4 L-6.8 -32.4 L-5.1 -33.2 L-3.1 -33.6 L-0.0 -33.8 L3.1 -33.6 L5.1 -33.2 L6.8 -32.4 L8.3 -31.4 L9.6 -30.0 L10.7 -28.4 L11.7 -26.4 L12.6 -24.1 L13.3 -21.5 L13.9 -18.6 L14.4 -15.3 L14.7 -11.6 L14.9 -7.1Z" transform="translate(332.3 262.1) rotate(-12)" fill="url(#g13e)"/><path d="M15.3 0.0 L15.2 1.7 L14.9 3.3 L14.5 4.8 L13.9 6.3 L13.1 7.6 L12.1 8.9 L11.0 10.0 L9.8 11.0 L8.4 11.9 L6.9 12.6 L5.3 13.2 L3.7 13.6 L1.9 13.8 L0.0 13.9 L-1.9 13.8 L-3.7 13.6 L-5.3 13.2 L-6.9 12.6 L-8.4 11.9 L-9.8 11.0 L-11.0 10.0 L-12.1 8.9 L-13.1 7.6 L-13.9 6.3 L-14.5 4.8 L-14.9 3.3 L-15.2 1.7 L-15.3 0.0 L-15.2 -1.7 L-14.9 -3.3 L-14.5 -4.8 L-13.9 -6.3 L-13.1 -7.6 L-12.1 -8.9 L-11.0 -10.0 L-9.8 -11.0 L-8.4 -11.9 L-6.9 -12.6 L-5.3 -13.2 L-3.7 -13.6 L-1.9 -13.8 L-0.0 -13.9 L1.9 -13.8 L3.7 -13.6 L5.3 -13.2 L6.9 -12.6 L8.4 -11.9 L9.8 -11.0 L11.0 -10.0 L12.1 -8.9 L13.1 -7.6 L13.9 -6.3 L14.5 -4.8 L14.9 -3.3 L15.2 -1.7Z" transform="translate(342.0 218.3) rotate(-20)" fill="url(#g15)"/><path d="M345.9 209.5 L355.0 205.3 L356.2 207.2 L349.9 214.5Z" fill="#1cae00"/><ellipse cx="355.7" cy="206.1" rx="2.3" ry="2.3" transform="rotate(0 355.7 206.1)" fill="#2ad000" />
</svg></div>
<div class="seg" style="left:264px;top:458.6px;width:102px;height:9.8px;font-size:6.2px;line-height:9.8px">
 <div class="on" style="width:20px">3D</div><div style="width:18.5px">2D</div><div style="width:33px">Preview</div><div style="width:30.5px">Layers</div>
</div>

<div class="lab" style="top:50.8px">Print settings:</div>
<div class="lab" style="top:64.6px">Filament:</div>
<div class="lab" style="top:92.2px">Printer:</div>
<div class="combo" style="top:50px"><span>Slic3r_creatorbot_config_PLA.ini</span><svg style="position:absolute;left:2.6px;top:0.9px" width="7.8" height="7.8" viewBox="0 0 16 16"><g fill="#e6e6e6" stroke="#c4c4c4" stroke-width="0.6"><rect x="6.4" y="0.8" width="3.2" height="14.4" rx="0.8" transform="rotate(0 8 8)"/><rect x="6.4" y="0.8" width="3.2" height="14.4" rx="0.8" transform="rotate(45 8 8)"/><rect x="6.4" y="0.8" width="3.2" height="14.4" rx="0.8" transform="rotate(90 8 8)"/><rect x="6.4" y="0.8" width="3.2" height="14.4" rx="0.8" transform="rotate(135 8 8)"/></g><circle cx="8" cy="8" r="5.2" fill="#e6e6e6"/><circle cx="8" cy="8" r="2.2" fill="#cfcfcf"/></svg></div>
<div class="combo" style="top:63.8px"><span>Slic3r_creatorbot_config_PLA.ini</span></div>
<div class="combo" style="top:77.6px"><span>Slic3r_creatorbot_config_PLA.ini</span></div>
<div class="combo" style="top:91.4px"><span>Slic3r_creatorbot_config_PLA.ini</span><svg style="position:absolute;left:2.8px;top:1.3px" width="7.4" height="7" viewBox="0 0 16 16"><path d="M3.5 2.5h9l1.8 5.5h-12.6Z" fill="#ededed" stroke="#9a9a9a" stroke-width="1"/><rect x="1" y="8" width="14" height="5.5" rx="1.2" fill="#bdbdbd" stroke="#8d8d8d" stroke-width="1"/></svg></div>
<div class="dd" style="top:50px"><svg width="4.2" height="3" viewBox="0 0 8 6"><path d="M1 1.2L4 4.4L7 1.2" fill="none" stroke="#444" stroke-width="1.5" stroke-linecap="round" stroke-linejoin="round"/></svg></div>
<div class="dd" style="top:63.8px"><svg width="4.2" height="3" viewBox="0 0 8 6"><path d="M1 1.2L4 4.4L7 1.2" fill="none" stroke="#444" stroke-width="1.5" stroke-linecap="round" stroke-linejoin="round"/></svg></div>
<div class="dd" style="top:77.6px"><svg width="4.2" height="3" viewBox="0 0 8 6"><path d="M1 1.2L4 4.4L7 1.2" fill="none" stroke="#444" stroke-width="1.5" stroke-linecap="round" stroke-linejoin="round"/></svg></div>
<div class="dd" style="top:91.4px"><svg width="4.2" height="3" viewBox="0 0 8 6"><path d="M1 1.2L4 4.4L7 1.2" fill="none" stroke="#444" stroke-width="1.5" stroke-linecap="round" stroke-linejoin="round"/></svg></div>
<div class="btn" style="left:676.3px;width:51.3px"><svg style="position:absolute;left:2.2px;top:1.6px" width="8" height="8" viewBox="0 0 16 16"><path d="M7 1L13 3.5V9L7 12L1 9V3.5Z" fill="#ececec" stroke="#a5a5a5" stroke-width="1"/><path d="M7 6.2V12M1 3.5L7 6.2L13 3.5" fill="none" stroke="#b0b0b0" stroke-width="0.9"/><circle cx="10.6" cy="10.8" r="4.6" fill="#58b548"/><circle cx="10.2" cy="10.2" r="2" fill="#9ad68e"/></svg><span style="left:11.5px">Export STL...</span></div>
<div class="btn" style="left:730.6px;width:61.8px"><svg style="position:absolute;left:2.2px;top:1.6px" width="8" height="8" viewBox="0 0 16 16"><path d="M7 1L13 3.5V9L7 12L1 9V3.5Z" fill="#ececec" stroke="#a5a5a5" stroke-width="1"/><path d="M7 6.2V12M1 3.5L7 6.2L13 3.5" fill="none" stroke="#b0b0b0" stroke-width="0.9"/><circle cx="10.6" cy="10.8" r="4.6" fill="#58b548"/><circle cx="10.2" cy="10.2" r="2" fill="#9ad68e"/></svg><span style="left:11.4px;font-size:6.55px">Export G-code...</span></div>

<div id="list" class="abs">
 <div id="lhead" class="abs">
  <div class="lt" style="left:1.8px;top:0px;font-size:5.6px">Name</div>
  <div class="lt" style="left:70.3px;top:0px;font-size:5.6px">Copies</div>
  <div class="lt" style="left:95.5px;top:0px;font-size:5.6px">Scale</div>
  <div class="csep" style="left:69.4px"></div><div class="csep" style="left:91.2px"></div><div class="csep" style="left:115.2px"></div>
 </div>
 <div id="lrow" class="abs">
  <div class="lt" style="left:-0.4px;top:0.7px;font-size:5.4px">balloon_dog.stl</div>
  <div class="lt" style="left:76.4px;top:0.7px">1</div>
  <div class="lt" style="left:94.6px;top:0.7px">100%</div>
 </div>
</div>
<div class="it" style="left:633px;top:430px">Info</div>
<div id="info" class="abs">
 <div class="it" style="left:5.3px;top:3.6px">Size:</div><div class="it" style="left:32.8px;top:3.6px">19.93 x 25.48 x 28.81</div>
 <div class="it" style="left:101.3px;top:3.6px">Volume:</div><div class="it" style="left:130.3px;top:3.6px">2985.79</div>
 <div class="it" style="left:5.3px;top:12.9px">Facets:</div><div class="it" style="left:32.8px;top:12.9px">270350 (1 shells)</div>
 <div class="it" style="left:101.3px;top:12.9px">Materials:</div><div class="it" style="left:130.3px;top:12.9px">1</div>
 <div class="it" style="left:5.3px;top:21.9px">Manifold:</div><div class="it" style="left:32.8px;top:21.9px">Yes</div>
</div>
<div id="status" class="abs"><div class="t" style="left:2.5px;top:0.6px;font-size:5.6px;color:#222">Generating perimeters...</div>
 <div class="abs" style="left:727px;top:1.8px;width:15px;height:5.5px;background:repeating-linear-gradient(0deg,rgba(255,255,255,.22) 0 0.5px,transparent 0.5px 1.9px),repeating-linear-gradient(90deg,#5a9ff2 0 3.3px,#86b8f6 3.3px 3.8px)"></div>
</div>
<div id="dark" class="abs"></div>
</body></html>
